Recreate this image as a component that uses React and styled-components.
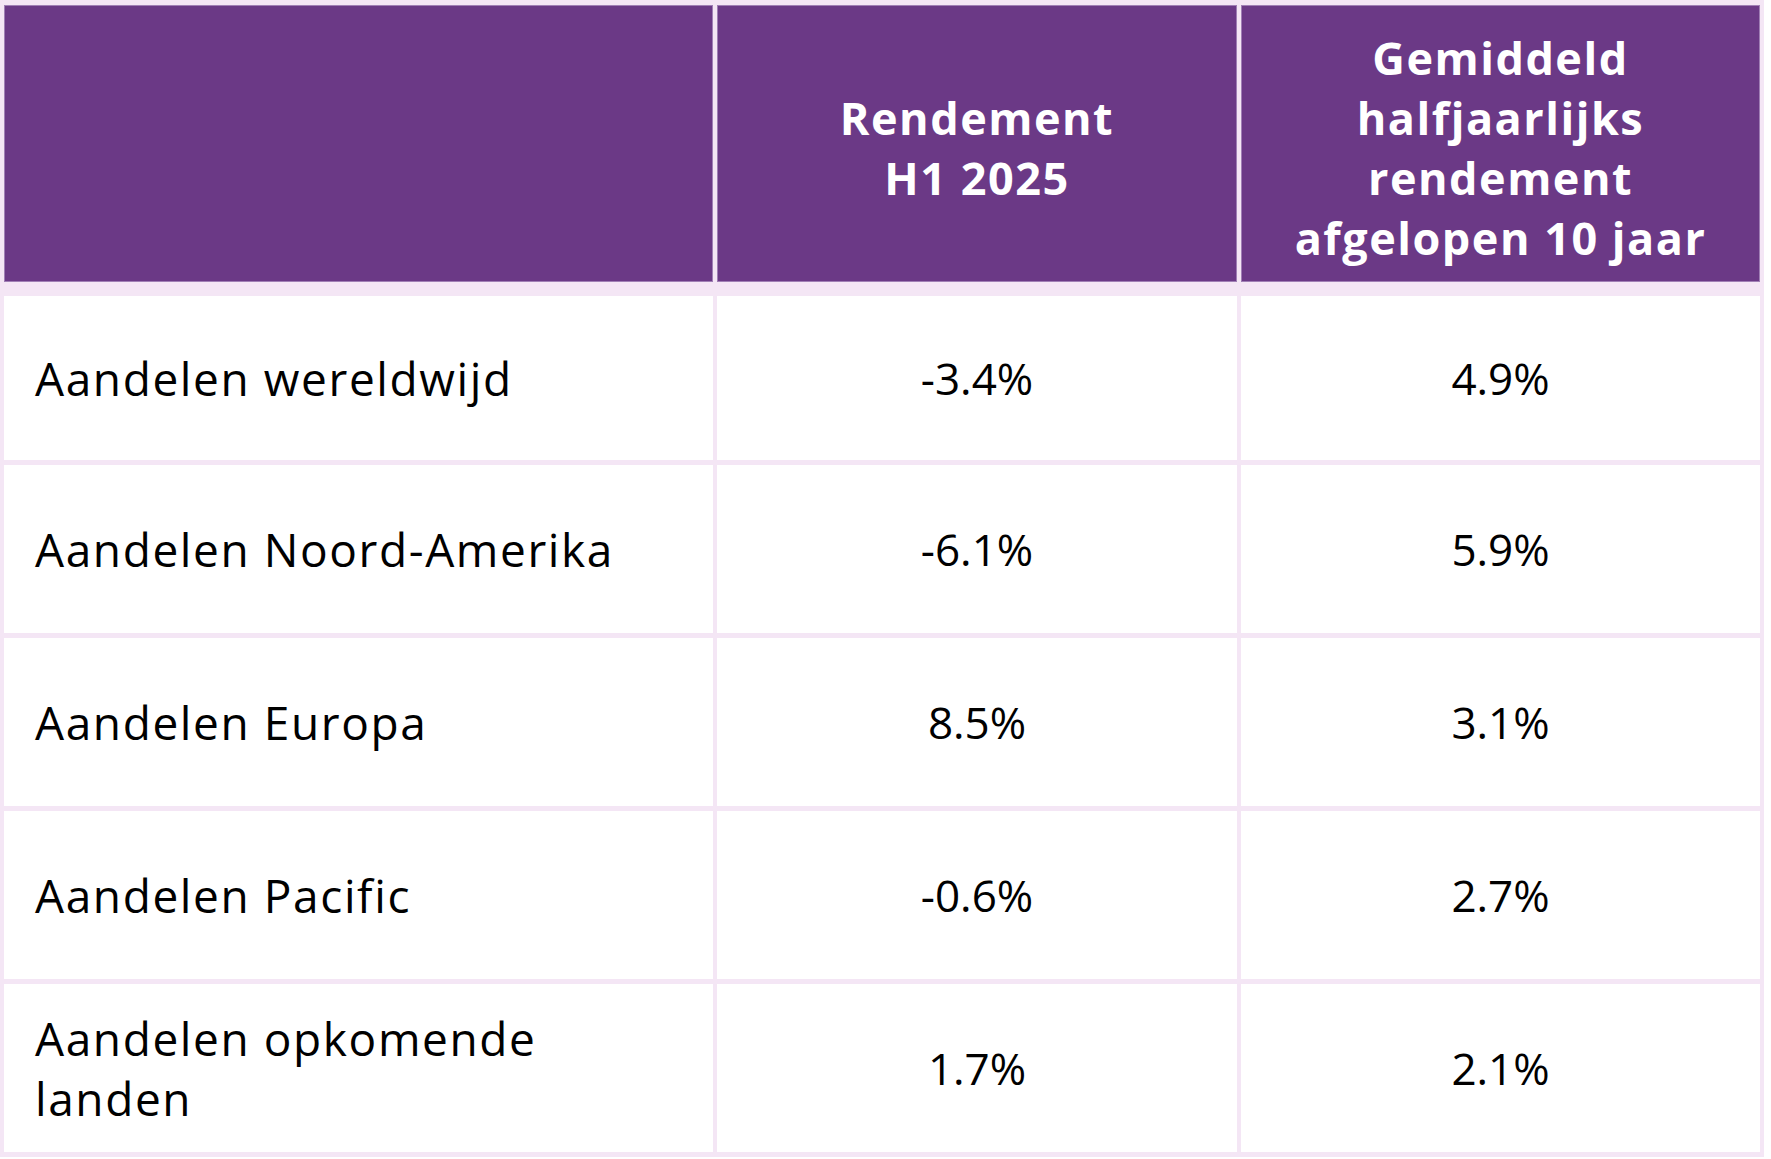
import React from "react";
import styled, { createGlobalStyle } from "styled-components";

const GlobalStyle = createGlobalStyle`
  html, body {
    margin: 0;
    padding: 0;
    background: #ffffff;
  }
  body {
    font-family: "Open Sans", "Noto Sans", "Liberation Sans", sans-serif;
    color: #000;
  }
`;

const Table = styled.div`
  width: 1764px;
  box-sizing: border-box;
  background: #f4e6f5;
  padding: 5px 4px 5px 4px;
  display: flex;
  flex-direction: column;
  gap: 5px;
`;

const Row = styled.div`
  display: grid;
  grid-template-columns: 709px 520px 1fr;
  column-gap: 4px;
  height: ${(p) => p.$height}px;
`;

const HeaderRow = styled(Row)`
  margin-bottom: 9px;
`;

const HeadCell = styled.div`
  background: #6b3986;
  box-shadow: inset 0 0 0 1px #a07fb5;
  color: #ffffff;
  font-weight: 700;
  font-size: 45px;
  letter-spacing: 1.5px;
  line-height: 60px;
  text-align: center;
  display: flex;
  align-items: center;
  justify-content: center;
  box-sizing: border-box;
  padding: 8px ${(p) => (p.$narrow ? 90 : 30)}px 0;
`;

const Cell = styled.div`
  background: #ffffff;
  display: flex;
  align-items: center;
  justify-content: ${(p) => (p.$label ? "flex-start" : "center")};
  padding: ${(p) => (p.$label ? "0 80px 0 31px" : "0")};
  font-size: ${(p) => (p.$label ? 46 : 44)}px;
  letter-spacing: ${(p) => (p.$label ? 1.6 : 0)}px;
  line-height: 60px;
  font-weight: 400;
  color: #000;
`;

const rows = [
  { label: "Aandelen wereldwijd", h1: "-3.4%", avg: "4.9%" },
  { label: "Aandelen Noord-Amerika", h1: "-6.1%", avg: "5.9%" },
  { label: "Aandelen Europa", h1: "8.5%", avg: "3.1%" },
  { label: "Aandelen Pacific", h1: "-0.6%", avg: "2.7%" },
  { label: "Aandelen opkomende landen", h1: "1.7%", avg: "2.1%" },
];

const App = () => {
  return (
    <>
      <GlobalStyle />
      <Table>
        <HeaderRow $height={277}>
          <HeadCell />
          <HeadCell $narrow>Rendement H1 2025</HeadCell>
          <HeadCell>Gemiddeld halfjaarlijks rendement afgelopen 10 jaar</HeadCell>
        </HeaderRow>
        {rows.map((r, i) => (
          <Row key={r.label} $height={i === 0 ? 164 : 168}>
            <Cell $label>{r.label}</Cell>
            <Cell>{r.h1}</Cell>
            <Cell>{r.avg}</Cell>
          </Row>
        ))}
      </Table>
    </>
  );
};

export default App;
